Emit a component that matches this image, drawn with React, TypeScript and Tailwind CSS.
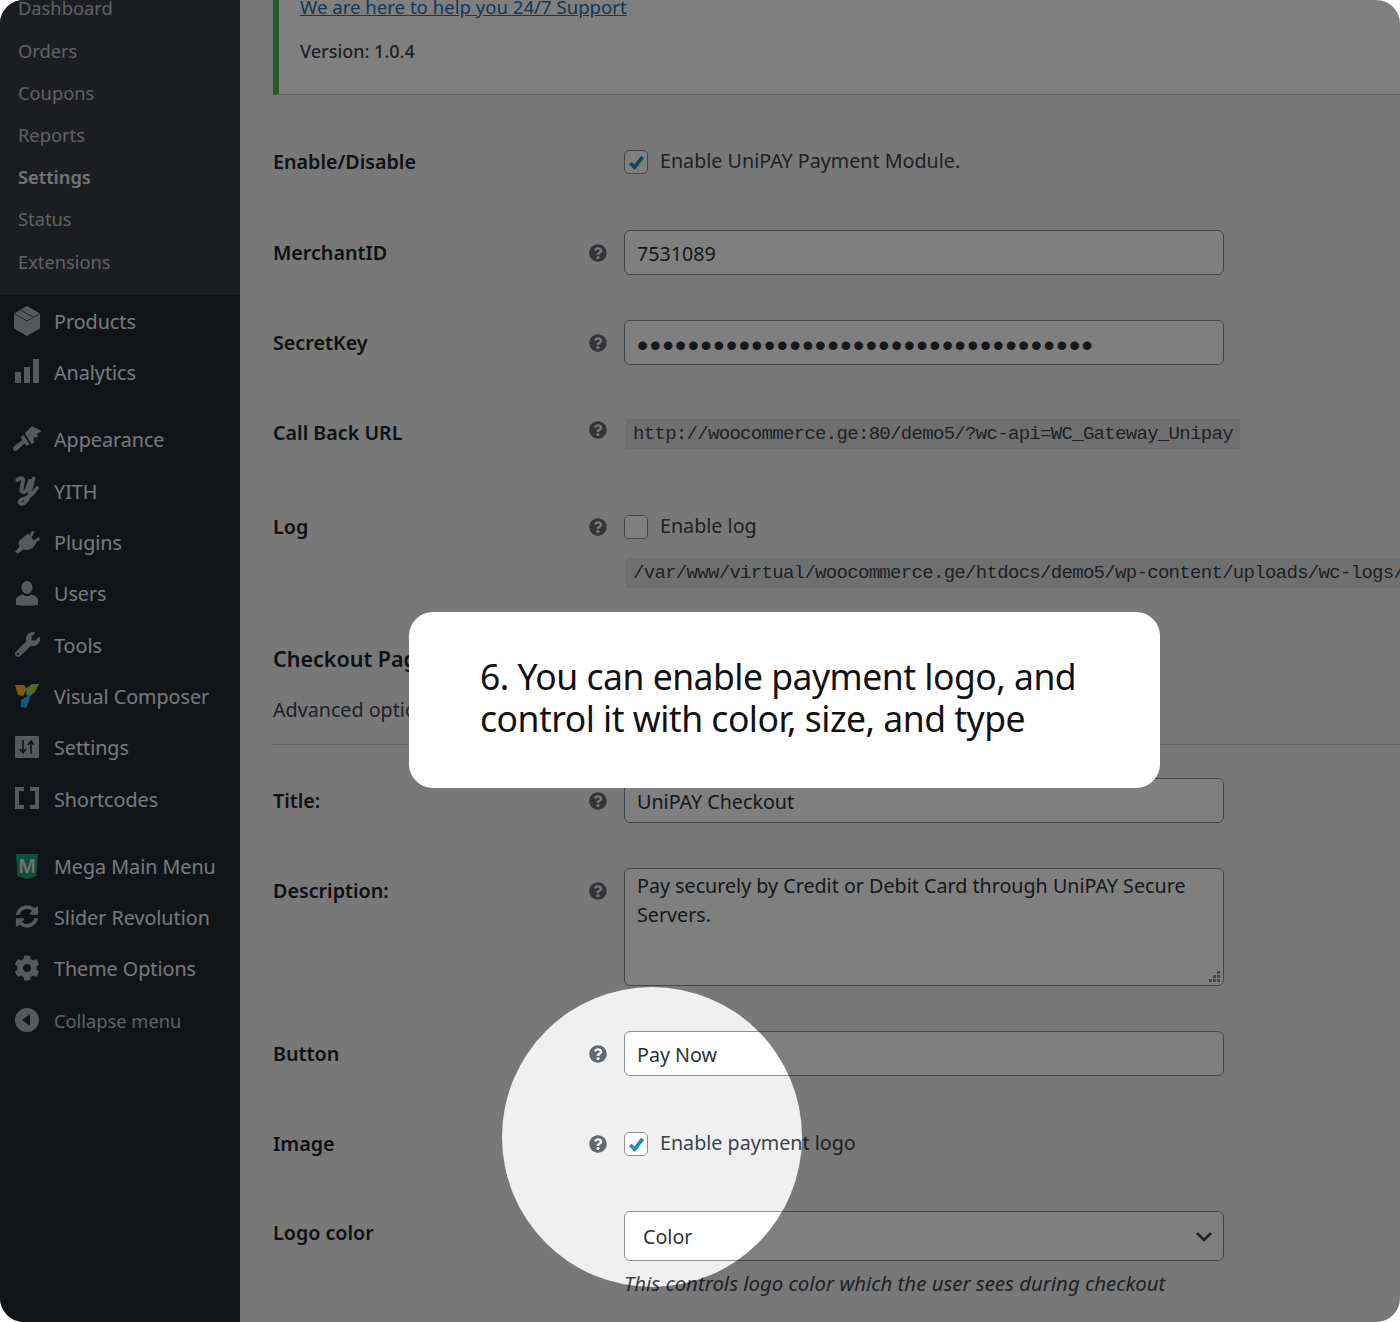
import type { ReactNode } from "react";
import { FaCog, FaQuestionCircle, FaSyncAlt, FaWrench } from "react-icons/fa";

const subItems = ["Dashboard", "Orders", "Coupons", "Reports", "Settings", "Status", "Extensions"];

function ProductsIcon() {
  return (
    <svg viewBox="0 0 28 30" className="h-[30px] w-[28px]">
      <path d="M14 0 27 7.5V22.5L14 30 1 22.5V7.5Z" className="fill-current" />
      <path d="M1 7.5 14 15 27 7.5M7.5 3.8 20.5 11.3" stroke="#22282f" strokeWidth="0.8" fill="none" />
    </svg>
  );
}

function AnalyticsIcon() {
  return (
    <svg viewBox="0 0 26 26" className="h-[26px] w-[26px] fill-current">
      <rect x="1" y="13" width="6" height="11" />
      <rect x="10" y="8" width="6" height="16" />
      <rect x="19" y="0" width="6" height="24" />
    </svg>
  );
}

function BrushIcon() {
  return (
    <svg viewBox="0 0 30 26" className="h-[26px] w-[30px] fill-current">
      <path d="M13 7 20 0 29.5 5 25 8 26 11 21.5 11.5 22 16 19.5 18.5Z" />
      <path d="M11.5 9 17.5 18 14.5 20 12.5 17.5 5 24.5C3.5 25.6 1 24.8 1 22.5 1 21.4 1.6 20.7 2.4 20L10.5 14 8.5 11Z" />
    </svg>
  );
}

function YithIcon() {
  return (
    <svg viewBox="0 0 24 32" className="h-[32px] w-[24px] fill-none stroke-current" strokeLinecap="round">
      <path d="M2.5 5C5 2.5 8.5 2.5 8 6.5L6.5 13.5C6 18 10 18 12 14.5L15 6" strokeWidth="4" />
      <path d="M18.5 3.5 14.5 19C13 26 9 30 5.5 28.5 3.5 27.5 4.5 24.5 8 24 13 23 18 19 22 13" strokeWidth="3.6" />
    </svg>
  );
}

function PlugIcon() {
  return (
    <svg viewBox="0 0 26 26" className="h-[26px] w-[26px] fill-current">
      <path d="M5 12 14 4.5 22 14 C20 19 15 22 9.5 20.5 L4 24.5 1 23 5.5 17.5 C4.5 16 4.5 14 5 12Z" />
      <path d="M14.5 8.5 18 1.5 20.5 3 17 9.5Z" />
      <path d="M18 13 24.5 8 26 10.5 20 15Z" />
    </svg>
  );
}

function UserIcon() {
  return (
    <svg viewBox="0 0 24 25" className="h-[25px] w-[24px] fill-current">
      <ellipse cx="12" cy="6.5" rx="5.5" ry="6.5" />
      <path d="M1 24V19C1 16 4 14.5 8 13.5 10.5 15.5 13.5 15.5 16 13.5 20 14.5 23 16 23 19V24C16 25 8 25 1 24Z" />
    </svg>
  );
}

function VisualComposerIcon() {
  return (
    <svg viewBox="0 0 26 26" className="h-[26px] w-[26px]">
      <path d="M1 2 H10 L13 6 L9 13 L4 12Z" fill="#f0b428" />
      <path d="M13 5 L18 1 H25 L21 9 L15 14 L12 11Z" fill="#9ad65c" />
      <path d="M7 17 L17 11 L15 18 L12 25 L7 24Z" fill="#22b4fc" />
    </svg>
  );
}

function SlidersIcon() {
  return (
    <svg viewBox="0 0 24 22" className="h-[22px] w-[24px]">
      <rect x="0" y="0" width="24" height="22" rx="1" className="fill-current" />
      <path d="M8 4V16M5 13 8 17 11 13M16 18V6M13 9 16 5 19 9" stroke="#22282f" strokeWidth="1.6" fill="none" />
    </svg>
  );
}

function BracketsIcon() {
  return (
    <svg viewBox="0 0 24 22" className="h-[22px] w-[24px] fill-none stroke-current" strokeWidth="4">
      <path d="M9 2H2V20H9" />
      <path d="M15 2H22V20H15" />
    </svg>
  );
}

function MegaIcon() {
  return (
    <svg viewBox="0 0 24 26" className="h-[26px] w-[24px]">
      <path d="M1 1H23L21.5 23 12 26 2.5 23Z" fill="#18a07a" />
      <text x="12" y="19.5" textAnchor="middle" fontSize="19" fontWeight="600" fontFamily="'Noto Sans', sans-serif" fill="#e2e4e3">
        M
      </text>
    </svg>
  );
}

function CollapseIcon() {
  return (
    <svg viewBox="0 0 24 24" className="h-6 w-6">
      <circle cx="12" cy="12" r="12" className="fill-current" />
      <path d="M15 6V18L7 12Z" fill="#22282f" />
    </svg>
  );
}

const groups: { icon: ReactNode; label: string; dim?: boolean }[][] = [
  [
    { icon: <ProductsIcon />, label: "Products" },
    { icon: <AnalyticsIcon />, label: "Analytics" },
  ],
  [
    { icon: <BrushIcon />, label: "Appearance" },
    { icon: <YithIcon />, label: "YITH" },
    { icon: <PlugIcon />, label: "Plugins" },
    { icon: <UserIcon />, label: "Users" },
    { icon: <FaWrench className="h-[25px] w-[25px]" />, label: "Tools" },
    { icon: <VisualComposerIcon />, label: "Visual Composer" },
    { icon: <SlidersIcon />, label: "Settings" },
    { icon: <BracketsIcon />, label: "Shortcodes" },
  ],
  [
    { icon: <MegaIcon />, label: "Mega Main Menu" },
    { icon: <FaSyncAlt className="h-[23px] w-[26px]" />, label: "Slider Revolution" },
    { icon: <FaCog className="h-[26px] w-[26px]" />, label: "Theme Options" },
    { icon: <CollapseIcon />, label: "Collapse menu", dim: true },
  ],
];

function Help() {
  return <FaQuestionCircle className="h-[18px] w-[18px] text-[#646970]" />;
}

function Check({ checked }: { checked?: boolean }) {
  return (
    <span className="grid h-[24px] w-[24px] shrink-0 place-items-center rounded-[5px] border border-[#8c8f94] bg-white">
      {checked && (
        <svg viewBox="0 0 20 20" className="h-[19px] w-[19px]">
          <path d="M3.5 10.5 8 15 16.5 4" fill="none" stroke="#1e8cbe" strokeWidth="4" />
        </svg>
      )}
    </span>
  );
}

function Row({ label, help, className, children }: { label?: string; help?: boolean; className: string; children?: ReactNode }) {
  return (
    <div className={`flex items-center ${className}`}>
      <div className="w-[316px] shrink-0 font-semibold text-[#1d2327]">{label}</div>
      <div className="w-[18px] shrink-0">{help && <Help />}</div>
      <div className="ml-[17px] min-w-0 flex-1">{children}</div>
    </div>
  );
}

function Field({ children }: { children: ReactNode }) {
  return (
    <div className="flex h-[45px] w-[600px] items-center rounded-[6px] border border-[#8c8f94] bg-white px-[12px] pt-[2px] text-[#2c3338]">
      {children}
    </div>
  );
}

function Code({ children }: { children: ReactNode }) {
  return (
    <code className="ml-[2px] inline-block h-[30px] bg-black/[0.07] px-[7px] font-['Liberation_Mono',monospace] text-[19px] leading-[30px] tracking-[-0.69px] whitespace-nowrap text-[#3c434a]">
      {children}
    </code>
  );
}

export default function App() {
  return (
    <div className="relative h-[1322px] w-[1400px] overflow-hidden rounded-[24px] bg-[#f0f0f1] font-['Noto_Sans',sans-serif] text-[19.7px] text-[#3c434a]">
      <div className="flex h-full">
        {/* admin menu */}
        <aside className="h-full w-[240px] shrink-0 bg-[#22282f] text-[#f0f0f1]">
          <div className="h-[295px] overflow-hidden bg-[#383a42] text-[18.3px] text-[#c0c2c6]">
            <ul className="-mt-[13px]">
              {subItems.map((s) => (
                <li key={s} className={`flex h-[42.2px] items-center pl-[18px] ${s === "Settings" ? "font-semibold text-[#e4e5e7]" : ""}`}>
                  {s}
                </li>
              ))}
            </ul>
          </div>
          {groups.map((g, i) => (
            <ul key={i} className={i > 0 ? "mt-[16px]" : ""}>
              {g.map((it) => (
                <li key={it.label} className={`flex h-[51.3px] items-center ${it.dim ? "text-[18.3px] text-[#c0c2c6]" : ""}`}>
                  <span className="grid w-[54px] shrink-0 place-items-center text-[#aeb1b4]">{it.icon}</span>
                  <span className="pt-[2px]">{it.label}</span>
                </li>
              ))}
            </ul>
          ))}
        </aside>

        {/* settings form */}
        <main className="min-w-0 flex-1 pl-[33px]">
          <div className="flex h-[95px] flex-col justify-end border-b border-[#c3c4c7] border-l-[6px] border-l-[#46b450] bg-white pb-[29px] pl-[21px]">
            <a className="text-[18.6px] text-[#2271b1] underline">We are here to help you 24/7 Support</a>
            <p className="mt-[17px] text-[18px] font-medium">Version: 1.0.4</p>
          </div>

          <Row label="Enable/Disable" className="mt-[55px] h-[24px]">
            <div className="flex items-center gap-[12px]">
              <Check checked />
              <span className="-mt-[2px]">Enable UniPAY Payment Module.</span>
            </div>
          </Row>
          <Row label="MerchantID" help className="mt-[56px] h-[45px]">
            <Field>7531089</Field>
          </Row>
          <Row label="SecretKey" help className="mt-[45px] h-[45px]">
            <Field>
              <span className="pt-[3px] font-['Liberation_Sans',sans-serif] text-[32px] leading-none tracking-[1.5px]">{"•".repeat(36)}</span>
            </Field>
          </Row>
          <Row label="Call Back URL" help className="mt-[53px] h-[30px] [&>div:nth-child(2)]:-mt-[6px]">
            <Code>http://woocommerce.ge:80/demo5/?wc-api=WC_Gateway_Unipay</Code>
          </Row>
          <Row label="Log" help className="mt-[67px] h-[24px]">
            <div className="flex items-center gap-[12px]">
              <Check />
              <span className="-mt-[2px]">Enable log</span>
            </div>
          </Row>
          <Row className="mt-[18px] h-[30px]">
            <Code>/var/www/virtual/woocommerce.ge/htdocs/demo5/wp-content/uploads/wc-logs/</Code>
          </Row>

          <h3 className="mt-[57px] h-[30px] text-[21.5px] leading-[30px] font-semibold text-[#1d2327]">Checkout Page</h3>
          <p className="mt-[21px] h-[30px] leading-[30px]">Advanced options</p>
          <div className="mt-[19px] border-t border-[#c3c4c7]" />

          <Row label="Title:" help className="mt-[33px] h-[45px]">
            <Field>UniPAY Checkout</Field>
          </Row>
          <Row
            label="Description:"
            help
            className="mt-[45px] h-[118px] !items-start [&>div:first-child]:pt-[8px] [&>div:nth-child(2)]:pt-[14px]"
          >
            <div className="relative h-[118px] w-[600px] rounded-[6px] border border-[#8c8f94] bg-white px-[12px] pt-[2px] leading-[29px] text-[#2c3338]">
              Pay securely by Credit or Debit Card through UniPAY Secure Servers.
              <svg viewBox="0 0 12 12" className="absolute right-[2px] bottom-[2px] h-[12px] w-[12px] fill-[#8c8f94]">
                <rect x="8" y="0" width="3" height="3" />
                <rect x="4" y="4" width="3" height="3" />
                <rect x="8" y="4" width="3" height="3" />
                <rect x="0" y="8" width="3" height="3" />
                <rect x="4" y="8" width="3" height="3" />
                <rect x="8" y="8" width="3" height="3" />
              </svg>
            </div>
          </Row>
          <Row label="Button" help className="mt-[45px] h-[45px]">
            <Field>Pay Now</Field>
          </Row>
          <Row label="Image" help className="mt-[56px] h-[24px]">
            <div className="flex items-center gap-[12px]">
              <Check checked />
              <span className="-mt-[2px]">Enable payment logo</span>
            </div>
          </Row>
          <Row label="Logo color" className="mt-[55px] h-[50px] [&>div:first-child]:-mt-[6px]">
            <div className="flex h-[50px] w-[600px] items-center justify-between rounded-[6px] border border-[#8c8f94] bg-white pr-[9px] pl-[18px] text-[#2c3338]">
              <span className="pt-[2px]">Color</span>
              <svg viewBox="0 0 20 20" className="h-[20px] w-[20px]">
                <path d="M3 7 10 14 17 7" fill="none" stroke="#3c434a" strokeWidth="2.6" />
              </svg>
            </div>
          </Row>
          <p className="mt-[7px] ml-[351px] text-[20.4px] italic whitespace-nowrap">This controls logo color which the user sees during checkout</p>
        </main>
      </div>

      {/* spotlight: the shadow dims everything outside the circle */}
      <div className="absolute top-[987px] left-[502px] h-[300px] w-[300px] rounded-full shadow-[0_0_0_2000px_rgba(0,0,0,0.5)]" />

      {/* callout */}
      <div className="absolute top-[612px] left-[409px] flex h-[176px] w-[751px] items-center rounded-[24px] bg-white pb-[6px] pl-[71px] font-['Noto_Sans',sans-serif] text-[35.5px] leading-[42px] tracking-[-0.5px] text-[#111]">
        <p>
          6. You can enable payment logo, and
          <br />
          control it with color, size, and type
        </p>
      </div>
    </div>
  );
}
